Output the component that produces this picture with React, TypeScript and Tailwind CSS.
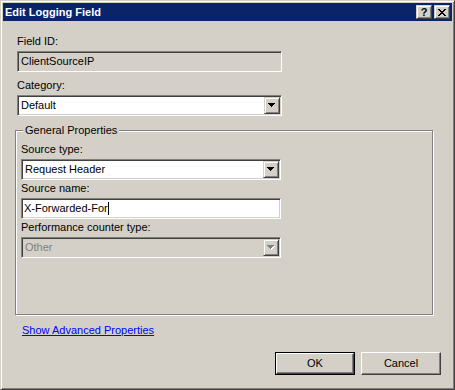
import React from "react";

const sunken =
  "border border-t-[#808080] border-l-[#808080] border-b-white border-r-white shadow-[inset_1px_1px_0_#404040,inset_-1px_-1px_0_#d4d0c8]";
const raised =
  "border border-t-[#d4d0c8] border-l-[#d4d0c8] border-b-[#404040] border-r-[#404040] shadow-[inset_1px_1px_0_#fff,inset_-1px_-1px_0_#808080]";

function Arrow({ disabled }: { disabled?: boolean }) {
  const rows = [
    [0, 7],
    [1, 5],
    [2, 3],
    [3, 1],
  ];
  return (
    <svg width="8" height="5" viewBox="0 0 8 5" shapeRendering="crispEdges">
      {disabled &&
        rows.map(([y, w], i) => (
          <rect key={"s" + i} x={y + 1} y={y + 1} width={w} height={1} fill="#ffffff" />
        ))}
      {rows.map(([y, w], i) => (
        <rect key={i} x={y} y={y} width={w} height={1} fill={disabled ? "#808080" : "#000000"} />
      ))}
    </svg>
  );
}

function Combo({ value, disabled, className }: { value: string; disabled?: boolean; className?: string }) {
  return (
    <div
      className={`h-[21px] p-[1px] flex items-stretch ${sunken} ${disabled ? "bg-[#d4d0c8] text-[#808080]" : "bg-white text-black"} ${className ?? ""}`}
    >
      <div className="flex-1 flex items-center pl-[2px] whitespace-nowrap">{value}</div>
      <div className={`w-[16px] flex items-center justify-center bg-[#d4d0c8] ${raised}`}>
        <Arrow disabled={disabled} />
      </div>
    </div>
  );
}

function CloseGlyph() {
  const rows = [
    [[0, 2], [6, 2]],
    [[1, 2], [5, 2]],
    [[2, 4]],
    [[3, 2]],
    [[2, 4]],
    [[1, 2], [5, 2]],
    [[0, 2], [6, 2]],
  ];
  return (
    <svg width="8" height="7" viewBox="0 0 8 7" shapeRendering="crispEdges">
      {rows.map((segs, y) =>
        segs.map(([x, w], i) => <rect key={y + "-" + i} x={x} y={y} width={w} height={1} fill="#000" />)
      )}
    </svg>
  );
}

export default function App() {
  return (
    <div
      className={`w-[455px] h-[390px] bg-[#d4d0c8] p-[2px] flex flex-col font-['Liberation_Sans',Arial,sans-serif] text-[11px] leading-[13px] text-black ${raised}`}
    >
      {/* Title bar */}
      <div className="h-[18px] bg-[#0a246a] flex items-center pl-[2px] pr-[2px]">
        <span className="flex-1 font-bold text-white whitespace-nowrap">Edit Logging Field</span>
        <div className="flex gap-[2px]">
          <div className={`w-[16px] h-[14px] bg-[#d4d0c8] flex items-center justify-center font-bold text-[11px] leading-[11px] ${raised}`}>
            ?
          </div>
          <div className={`w-[16px] h-[14px] bg-[#d4d0c8] flex items-center justify-center ${raised}`}>
            <CloseGlyph />
          </div>
        </div>
      </div>

      {/* Body */}
      <div className="flex flex-col pl-[14px] pt-[14px]">
        <div className="h-[13px]">Field ID:</div>
        <div className={`mt-[3px] w-[265px] h-[21px] bg-[#d4d0c8] flex items-center pl-[3px] ${sunken}`}>
          ClientSourceIP
        </div>

        <div className="mt-[7px] h-[13px]">Category:</div>
        <Combo className="mt-[3px] w-[265px]" value="Default" />

        <div className="relative mt-[14px] -ml-[2px] w-[418px] h-[185px] border border-[#808080] shadow-[inset_1px_1px_0_#fff,1px_1px_0_#fff] pl-[5px] pt-[12px] flex flex-col">
          <span className="absolute left-[7px] -top-[7px] bg-[#d4d0c8] px-[2px] whitespace-nowrap">
            General Properties
          </span>
          <div className="h-[13px]">Source type:</div>
          <Combo className="mt-[3px] w-[260px]" value="Request Header" />

          <div className="mt-[2px] h-[13px]">Source name:</div>
          <div className={`mt-[3px] w-[260px] h-[21px] bg-white flex items-center pl-[2px] ${sunken}`}>
            <span>X-Forwarded-For</span>
            <span className="inline-block w-[1px] h-[13px] bg-black" />
          </div>

          <div className="mt-[2px] h-[13px]">Performance counter type:</div>
          <Combo className="mt-[3px] w-[260px]" value="Other" disabled />
        </div>

        <div className="mt-[9px] ml-[5px] h-[13px]">
          <span className="text-[#0000ff] underline cursor-pointer">Show Advanced Properties</span>
        </div>

        <div className="mt-[15px] flex justify-end gap-[6px] pr-[11px]">
          <div className="w-[80px] h-[23px] border border-black p-0">
            <div className="w-full h-full flex items-center justify-center border border-t-white border-l-white border-b-[#404040] border-r-[#404040] shadow-[inset_-1px_-1px_0_#808080]">
              OK
            </div>
          </div>
          <div className="w-[80px] h-[23px] flex items-center justify-center border border-t-white border-l-white border-b-[#404040] border-r-[#404040] shadow-[inset_-1px_-1px_0_#808080]">
            Cancel
          </div>
        </div>
      </div>
    </div>
  );
}
